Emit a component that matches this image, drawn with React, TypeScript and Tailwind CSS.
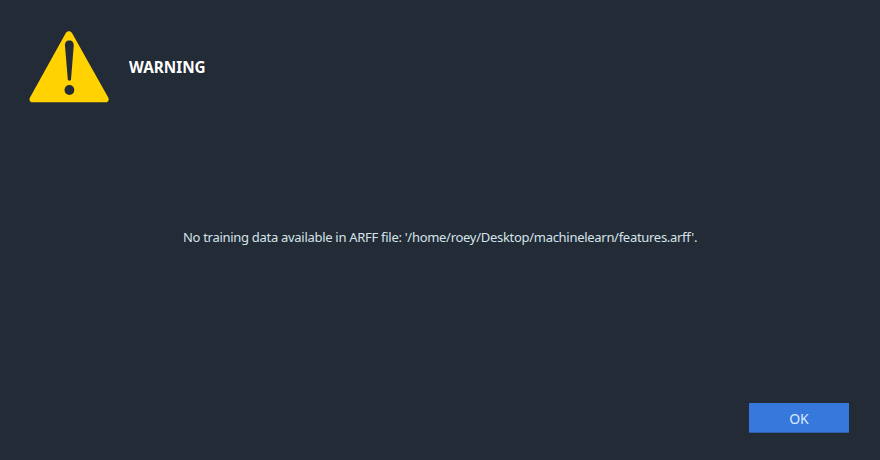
const WarningIcon = () => (
  <svg width="80" height="72" viewBox="0 0 80 72" className="shrink-0">
    <path
      d="M36.8 2 C38.4 -0.2 41.4 -0.2 43 2 L79.2 66.5 C80.5 69 79.2 71.3 76.4 71.3 L3.6 71.3 C1 71.3 -0.2 69 1 66.5 Z"
      fill="#ffd200"
    />
    <path
      d="M36 15 C35.7 11.5 37.4 9.5 40.4 9.5 C43.4 9.5 45 11.5 44.7 15 L42 48.5 C41.9 50 38.9 50 38.8 48.5 Z"
      fill="#222b36"
    />
    <circle cx="40.4" cy="59" r="4.9" fill="#222b36" />
  </svg>
);

export default function App() {
  return (
    <div className="w-[880px] h-[460px] flex flex-col bg-[#222b36] font-['Noto_Sans',sans-serif] overflow-hidden">
      {/* Header */}
      <div className="flex items-center pl-[29px] pt-[31px] gap-5">
        <WarningIcon />
        <h1 className="text-white font-bold text-[15.3px] leading-5 pb-px">WARNING</h1>
      </div>

      {/* Message */}
      <div className="flex justify-center mt-[124px]">
        <p className="text-[#d5e3ea] text-[13px] leading-5 tracking-[-0.29px]">
          No training data available in ARFF file: '/home/roey/Desktop/machinelearn/features.arff'.
        </p>
      </div>

      {/* Actions */}
      <div className="flex justify-end mt-auto pr-[31px] pb-[27px]">
        <button className="w-[100px] h-[30px] pt-px bg-[#3778dc] border-b border-[#2f5ea8] text-[#dcebff] text-[14px]">
          OK
        </button>
      </div>
    </div>
  );
}
